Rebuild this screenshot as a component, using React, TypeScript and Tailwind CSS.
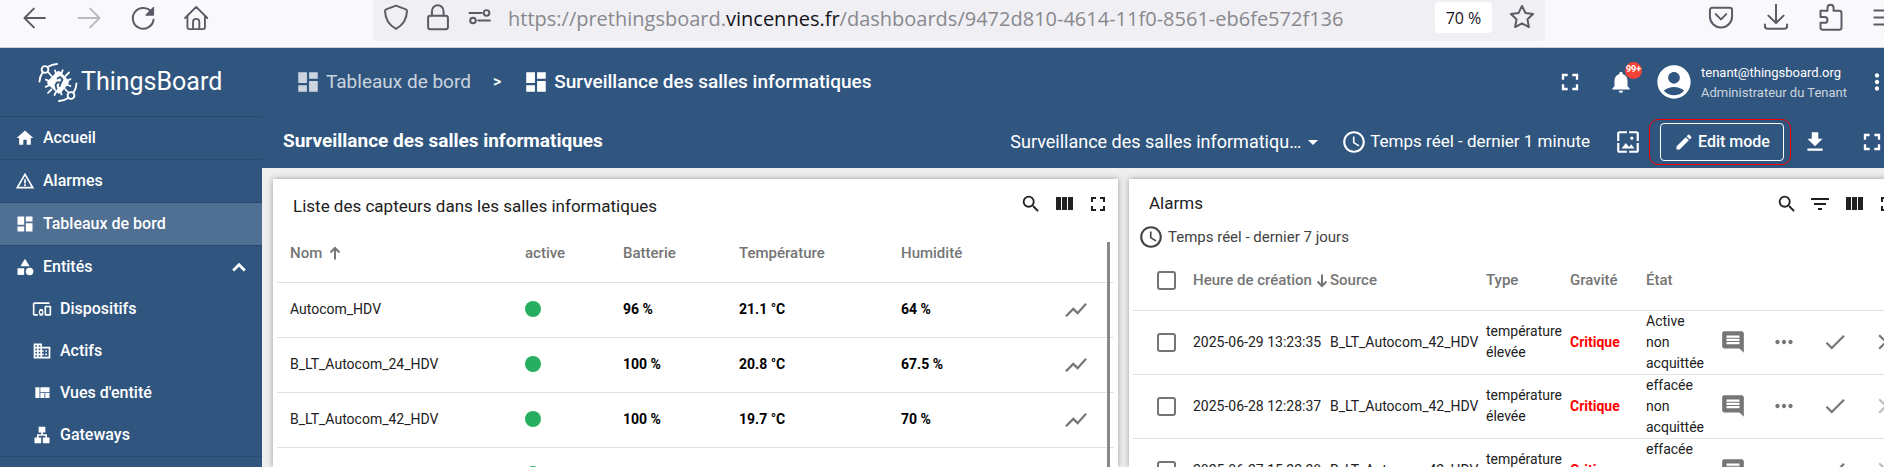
import React from "react";
import {
  MdHome, MdWarningAmber, MdDashboard, MdCategory, MdDevicesOther, MdDomain, MdLan, MdSearch, MdFullscreen,
  MdShowChart, MdFilterList, MdComment, MdMoreHoriz, MdDone, MdClear, MdNotifications, MdAccountCircle, MdMoreVert,
  MdWallpaper, MdEdit, MdFileDownload, MdQueryBuilder, MdArrowDropDown,
} from "react-icons/md";

type GlyphProps = { className?: string; children: React.ReactNode; box?: string };

function Line({ className = "size-6", children, box = "0 0 24 24" }: GlyphProps) {
  return (
    <svg viewBox={box} className={className} fill="none" stroke="currentColor" strokeWidth="2" strokeLinecap="round" strokeLinejoin="round" aria-hidden="true">
      {children}
    </svg>
  );
}

function ViewColumn({ className = "size-6" }: { className?: string }) {
  return (
    <svg viewBox="0 0 24 24" className={className} fill="currentColor" aria-hidden="true">
      <path d="M10 18h5V5h-5v13zm-6 0h5V5H4v13zM16 5v13h5V5h-5z" />
    </svg>
  );
}

function ViewQuilt({ className = "size-5" }: { className?: string }) {
  return (
    <svg viewBox="0 0 24 24" className={className} fill="currentColor" aria-hidden="true">
      <path d="M10 18h5v-6h-5v6zm-6 0h5V5H4v13zm12 0h5v-6h-5v6zM10 5v6h11V5H10z" />
    </svg>
  );
}

function SortArrow({ down = false }: { down?: boolean }) {
  return (
    <svg viewBox="0 0 12 14" className={down ? "h-[14px] w-3 rotate-180" : "h-[14px] w-3"} fill="none" stroke="currentColor" strokeWidth="2" aria-hidden="true">
      <path d="M6 13.500V2.500M1.500 6.500L6 2l4.500 4.500" />
    </svg>
  );
}

function Logo() {
  return (
    <svg viewBox="0 0 40 40" className="size-10" fill="none" stroke="#fff" strokeWidth="1.900" strokeLinecap="round" aria-hidden="true">
      <circle cx="7" cy="7.500" r="3.400" />
      <path d="M9.800 5C12.500 3.200 15.500 2.200 19 2M4.600 10.300C2.800 13.200 1.700 16 1.500 19.500" />
      <circle cx="33" cy="33.500" r="3.400" />
      <path d="M30.200 36C27.500 37.800 24.500 38.800 21 39M35.400 30.700C37.200 28 38.300 25 38.500 21.500" />
      <path strokeWidth="1.800" d="M13.500 14l-3-3.500M18 11.500l-1-3.200M23.500 11.500l1.200-3.200M27.500 14l3.500-3.500M29.500 18.500l3-1.300M29.500 23l3 1M27 27l3.300 3.500M22.500 29.500l1 3M18 30l-1.500 3M13.500 27.500l-3.500 3.300M11 23.500l-3.400 1.300M10.800 18.800l-3-1.200" />
      <path fill="#fff" stroke="none" d="M22.200 9.400l8 8.600q1.300 1.600 .3 3.500L23 30.800q-1.600 1.400-3.400.2L9.800 22.500q-1.200-1.600-.2-3.300L18.500 10q1.900-1.800 3.700-.6z" />
      <path stroke="#305680" strokeWidth="1.800" strokeLinejoin="round" d="M19.500 16.500l2.500-1.500 2.500 2.500-1.500 3h-4l-1.500 2.500 1 4M22.800 20.500l-1 3.500" />
    </svg>
  );
}

const menu = [
  { label: "Accueil", icon: MdHome, active: false },
  { label: "Alarmes", icon: MdWarningAmber, active: false },
  { label: "Tableaux de bord", icon: MdDashboard, active: true },
];

const entities = [
  { label: "Dispositifs", icon: MdDevicesOther },
  { label: "Actifs", icon: MdDomain },
  { label: "Vues d'entité", icon: ViewQuilt },
  { label: "Gateways", icon: MdLan },
];

const sensors = [
  { name: "Autocom_HDV", battery: "96 %", temp: "21.1 °C", hum: "64 %" },
  { name: "B_LT_Autocom_24_HDV", battery: "100 %", temp: "20.8 °C", hum: "67.5 %" },
  { name: "B_LT_Autocom_42_HDV", battery: "100 %", temp: "19.7 °C", hum: "70 %" },
  { name: "", battery: "", temp: "", hum: "" },
];

const alarms = [
  { time: "2025-06-29 13:23:35", state: "Active non acquittée", clearable: true },
  { time: "2025-06-28 12:28:37", state: "effacée non acquittée", clearable: false },
  { time: "2025-06-27 15:22:28", state: "effacée non acquittée", clearable: false },
];

function BrowserBar() {
  return (
    <div className="flex h-12 shrink-0 items-start border-b border-[#c9cfd3] bg-[#f9f9fb] text-[#5b5b66]">
      <div className="flex w-[373px] shrink-0 items-center gap-[26px] pt-1 pl-[21px]">
        <button aria-label="Précédent" className="size-7"><Line className="size-7"><path strokeWidth="1.700" d="M20.500 12H3.500M11 4L3 12l8 8" /></Line></button>
        <button aria-label="Suivant" className="size-7 text-[#b9b9c0]"><Line className="size-7"><path strokeWidth="1.700" d="M3 12h17.500M13 4l8 8-8 8" /></Line></button>
        <button aria-label="Actualiser" className="size-7">
          <Line className="size-7"><path strokeWidth="1.700" d="M19.500 7.200A8.900 8.900 0 1 0 21 13.500" /><path fill="currentColor" strokeWidth="1" d="M21 3v6.500h-6.500z" /></Line>
        </button>
        <button aria-label="Page d'accueil" className="size-7">
          <Line className="size-7"><path strokeWidth="1.600" d="M1.800 12L11.300 2.500 20.800 12M3.800 10.500V20a1.500 1.500 0 0 0 1.500 1.500h12a1.500 1.500 0 0 0 1.500-1.500v-9.500M8.600 21v-5.500a2.700 2.700 0 0 1 5.400 0V21" /></Line>
        </button>
      </div>
      <div className="flex h-[41px] min-w-0 flex-1 items-start rounded-b-[5px] bg-[#f0f0f4]">
        <div className="flex w-[135px] shrink-0 items-center gap-[14px] pt-[3px] pl-[9px]">
          <Line className="size-7"><path strokeWidth="1.700" d="M12 2.300l8.500 3.200c.8.300.9.700.9 1.400C21.200 14 18.500 18.800 12 22.200 5.500 18.800 2.800 14 2.600 6.900c0-.7.100-1.100.9-1.400z" /></Line>
          <Line className="size-7"><rect strokeWidth="1.700" x="3.500" y="11" width="17" height="11.500" rx="2" /><path strokeWidth="1.700" d="M6.800 11V7a5 5 0 0 1 10 0v4" /></Line>
          <Line className="size-7"><path strokeWidth="1.700" d="M3 8.500h10.500M10.500 15h10" /><circle strokeWidth="1.700" cx="17.600" cy="8.500" r="2.400" /><circle strokeWidth="1.700" cx="6" cy="15" r="2.400" /></Line>
        </div>
        <div className="min-w-0 flex-1 truncate pt-[5px] font-['Open_Sans',sans-serif] text-[20px] leading-7 text-[#88888e]">
          https://prethingsboard.<span className="text-[#15141a]">vincennes.fr</span>/dashboards/9472d810-4614-11f0-8561-eb6fe572f136
        </div>
        <button className="mt-[2px] h-[31px] w-[57px] rounded-[4px] bg-white font-['Open_Sans',sans-serif] text-[16px] text-[#15141a]">70 %</button>
        <button aria-label="Marquer cette page" className="mt-[3px] mr-[9px] ml-4 size-7">
          <Line className="size-7"><path strokeWidth="1.700" d="M12 2.500l2.900 6 6.600.9-4.800 4.600 1.200 6.600-5.900-3.100-5.900 3.100 1.200-6.600L2.500 9.400l6.600-.9z" /></Line>
        </button>
      </div>
      <div className="flex w-[359px] shrink-0 items-center justify-end gap-[27px] pt-[3px] pr-1">
        <Line className="size-7"><path strokeWidth="1.700" d="M4.500 4h15A2 2 0 0 1 21.500 6v5.500a9.500 9.500 0 0 1-19 0V6a2 2 0 0 1 2-2zM7.500 9.500l4.500 4.500 4.500-4.500" /></Line>
        <Line className="size-7"><path strokeWidth="1.700" d="M12 1.500V17M5.500 10.800L12 17.200l6.500-6.400M2.500 18.500v1.500a2 2 0 0 0 2 2h15a2 2 0 0 0 2-2v-1.500" /></Line>
        <Line className="size-7"><path strokeWidth="1.700" d="M3 8.500V6.700h6V4a2.600 2.600 0 0 1 5.200 0v2.700H19a2 2 0 0 1 2 2V21a2 2 0 0 1-2 2H5a2 2 0 0 1-2-2v-4h3.500a2.500 2.500 0 0 0 0-5H3z" /></Line>
        <Line className="size-7"><path strokeWidth="1.700" d="M2 6.500h20M2 12.500h20M2 18.500h20" /></Line>
      </div>
    </div>
  );
}

function Sidebar() {
  return (
    <nav className="flex w-[262px] shrink-0 flex-col bg-[#305680] text-[16px] font-medium text-white">
      <a href="#" className="flex h-[69px] shrink-0 items-center gap-[3px] border-b border-[#294a6e] pl-[38px]">
        <Logo />
        <span className="text-[25px] leading-8 font-normal">ThingsBoard</span>
      </a>
      {menu.map(({ label, icon: Icon, active }) => (
        <a key={label} href="#" className={`flex h-[43px] shrink-0 items-center gap-2 border-b border-[#294a6e] pl-[15px] ${active ? "bg-[#4f6f93]" : ""}`}>
          <Icon className="size-5" />
          {label}
        </a>
      ))}
      <div className="shrink-0 border-b border-[#294a6e]">
        <button className="flex h-[42px] w-full items-center gap-2 pr-[16px] pl-[15px] text-left">
          <MdCategory className="size-5" />
          <span className="flex-1">Entités</span>
          <svg viewBox="0 0 14 10" className="h-[10px] w-[14px]" fill="none" stroke="currentColor" strokeWidth="2.800" aria-hidden="true"><path d="M1.200 8.500L7 2.700l5.800 5.800" /></svg>
        </button>
        {entities.map(({ label, icon: Icon }) => (
          <a key={label} href="#" className="flex h-[42px] items-center gap-2 pl-8">
            <Icon className="size-5" />
            {label}
          </a>
        ))}
      </div>
    </nav>
  );
}

function Header() {
  return (
    <header className="shrink-0 bg-[#305680] text-white">
      <div className="flex h-[67px] items-center">
        <a href="#" className="ml-[33px] flex items-center gap-[5px] text-[19px] text-white/75"><MdDashboard className="size-[26px]" /><span className="pt-[2px]">Tableaux de bord</span></a>
        <span className="mx-[22px] text-[16px] font-medium">&gt;</span>
        <span className="flex items-center gap-[5px] text-[19px] font-medium"><MdDashboard className="size-[26px]" /><span className="pt-[2px]">Surveillance des salles informatiques</span></span>
        <div className="ml-auto flex items-center">
          <button aria-label="Plein écran"><MdFullscreen className="size-7" /></button>
          <button aria-label="Notifications" className="relative ml-6">
            <MdNotifications className="size-[26px]" />
            <span className="absolute -top-[7px] left-[17px] flex size-[17px] items-center justify-center rounded-full bg-[#f44336] text-[9px] font-bold">99+</span>
          </button>
          <MdAccountCircle className="ml-5 size-10" />
          <div className="ml-[7px] w-[163px] pt-[2px] text-[13px] leading-5">
            <div>tenant@thingsboard.org</div>
            <div className="text-white/75">Administrateur du Tenant</div>
          </div>
          <button aria-label="Menu" className="mr-[14px]"><MdMoreVert className="size-[26px]" /></button>
        </div>
      </div>
      <div className="flex h-[53px] items-center">
        <h1 className="ml-[21px] text-[19px] font-bold">Surveillance des salles informatiques</h1>
        <div className="ml-auto flex items-center text-[17px]">
          <button className="flex items-center">
            <span className="w-[291px] truncate text-left text-[18px]">Surveillance des salles informatiques</span>
            <MdArrowDropDown className="size-6" />
          </button>
          <button className="ml-4 flex items-center gap-[3px]"><MdQueryBuilder className="size-[26px]" />Temps réel - dernier 1 minute</button>
          <button aria-label="Image du tableau" className="ml-[25px]"><MdWallpaper className="size-[26px]" /></button>
          <div className="ml-2 rounded-[9px] border border-[#f00000] py-[3px] pr-[6px] pl-[10px]">
            <button className="flex h-[38px] w-[124px] items-center justify-center gap-1 rounded-[4px] border border-white text-[16px] font-medium"><MdEdit className="size-5" />Edit mode</button>
          </div>
          <button aria-label="Exporter" className="ml-[11px]"><MdFileDownload className="size-[26px]" /></button>
          <button aria-label="Agrandir" className="mr-[18px] ml-[30px]"><MdFullscreen className="size-7" /></button>
        </div>
      </div>
    </header>
  );
}

function SensorsWidget() {
  return (
    <section className="flex w-[845px] shrink-0 flex-col bg-white px-1 shadow-[0_0_6px_rgba(0,0,0,0.35)]">
      <div className="flex h-[50px] shrink-0 items-center pr-1 pl-4 text-[#212121]">
        <h2 className="flex-1 pt-[5px] text-[17px]">Liste des capteurs dans les salles informatiques</h2>
        <div className="flex items-center gap-[10px]">
          <button aria-label="Rechercher"><MdSearch className="size-[22px]" /></button>
          <button aria-label="Colonnes"><ViewColumn /></button>
          <button aria-label="Plein écran"><MdFullscreen className="size-6" /></button>
        </div>
      </div>
      <div className="relative">
        <table className="w-full table-fixed text-left text-[14px] text-[#212121]">
          <colgroup>
            <col className="w-[248px]" /><col className="w-[98px]" /><col className="w-[116px]" /><col className="w-[162px]" /><col className="w-[148px]" /><col />
          </colgroup>
          <thead>
            <tr className="h-[53px] border-b border-[#e0e0e0] text-[15px] text-[#757575]">
              <th className="pb-1 pl-[13px] font-medium"><span className="flex items-center gap-[7px]">Nom <SortArrow /></span></th>
              <th className="pb-1 font-medium">active</th>
              <th className="pb-1 font-medium">Batterie</th>
              <th className="pb-1 font-medium">Température</th>
              <th className="pb-1 font-medium">Humidité</th>
              <th aria-label="Actions" />
            </tr>
          </thead>
          <tbody>
            {sensors.map((s, i) => (
              <tr key={i} className="h-[55px] border-b border-[#e0e0e0]">
                <td className="pl-[13px]">{s.name}</td>
                <td className="pb-[2px]"><span className="block size-4 rounded-full bg-[#27ae60]" /></td>
                <td className="font-bold text-black">{s.battery}</td>
                <td className="font-bold text-black">{s.temp}</td>
                <td className="font-bold text-black">{s.hum}</td>
                <td className="text-[#757575]"><button aria-label="Graphique" className="ml-[14px] block"><MdShowChart className="size-[26px]" /></button></td>
              </tr>
            ))}
          </tbody>
        </table>
        <div className="absolute top-[13px] right-1 bottom-0 w-[3px] bg-[#888]" />
      </div>
    </section>
  );
}

const box = "block size-[19px] appearance-none rounded-[3px] border-2 border-[#757575] bg-white";

function AlarmsWidget() {
  return (
    <section className="flex min-w-0 flex-1 flex-col bg-white pl-1 shadow-[0_0_6px_rgba(0,0,0,0.35)]">
      <div className="flex h-[45px] shrink-0 items-center pr-1 pl-4 text-[#212121]">
        <h2 className="flex-1 pt-1 text-[17px]">Alarms</h2>
        <div className="flex items-center gap-[10px] pt-[5px]">
          <button aria-label="Rechercher"><MdSearch className="size-[22px]" /></button>
          <button aria-label="Filtrer"><MdFilterList className="size-6" /></button>
          <button aria-label="Colonnes"><ViewColumn /></button>
          <button aria-label="Plein écran"><MdFullscreen className="size-6" /></button>
        </div>
      </div>
      <button className="flex h-[26px] shrink-0 items-center gap-1 pl-[5px] text-[15px] text-[#424242]"><MdQueryBuilder className="size-[26px]" />Temps réel - dernier 7 jours</button>
      <table className="w-full table-fixed text-left text-[14px] leading-[21px] text-[#212121]">
        <colgroup>
          <col className="w-[60px]" /><col className="w-[137px]" /><col className="w-[156px]" /><col className="w-[84px]" /><col className="w-[76px]" /><col className="w-[74px]" /><col />
        </colgroup>
        <thead>
          <tr className="h-[60px] border-b border-[#e0e0e0] text-[15px] text-[#757575]">
            <th className="pt-[2px] pl-6"><input type="checkbox" aria-label="Tout sélectionner" className={box} /></th>
            <th className="pt-[2px] font-medium"><span className="flex items-center gap-1 whitespace-nowrap">Heure de création <SortArrow down /></span></th>
            <th className="pt-[2px] font-medium">Source</th>
            <th className="pt-[2px] font-medium">Type</th>
            <th className="pt-[2px] font-medium">Gravité</th>
            <th className="pt-[2px] font-medium">État</th>
            <th aria-label="Actions" />
          </tr>
        </thead>
        <tbody>
          {alarms.map((a) => (
            <tr key={a.time} className="h-16 border-b border-[#e0e0e0]">
              <td className="pl-6"><input type="checkbox" aria-label={a.time} className={box} /></td>
              <td className="whitespace-nowrap">{a.time}</td>
              <td className="whitespace-nowrap">B_LT_Autocom_42_HDV</td>
              <td>température élevée</td>
              <td className="font-bold text-[#f00]">Critique</td>
              <td><span className="block w-[60px]">{a.state}</span></td>
              <td>
                <div className="flex gap-[25px] text-[#757575]">
                  <button aria-label="Commentaires"><MdComment className="size-[26px]" /></button>
                  <button aria-label="Détails"><MdMoreHoriz className="size-[26px]" /></button>
                  <button aria-label="Acquitter"><MdDone className="size-[26px]" /></button>
                  <button aria-label="Effacer" className={a.clearable ? "" : "text-[#bdbdbd]"}><MdClear className="size-[26px]" /></button>
                </div>
              </td>
            </tr>
          ))}
        </tbody>
      </table>
    </section>
  );
}

export default function App() {
  return (
    <div className="h-screen overflow-hidden font-[Roboto,sans-serif]">
      <div className="flex h-full w-[calc(100%+20px)] flex-col">
        <BrowserBar />
        <div className="flex min-h-0 flex-1">
          <Sidebar />
          <div className="flex min-w-0 flex-1 flex-col">
            <Header />
            <main className="flex min-h-0 flex-1 gap-[11px] overflow-hidden bg-[#eee] pt-[11px] pl-[11px]">
              <SensorsWidget />
              <AlarmsWidget />
            </main>
          </div>
        </div>
      </div>
    </div>
  );
}
